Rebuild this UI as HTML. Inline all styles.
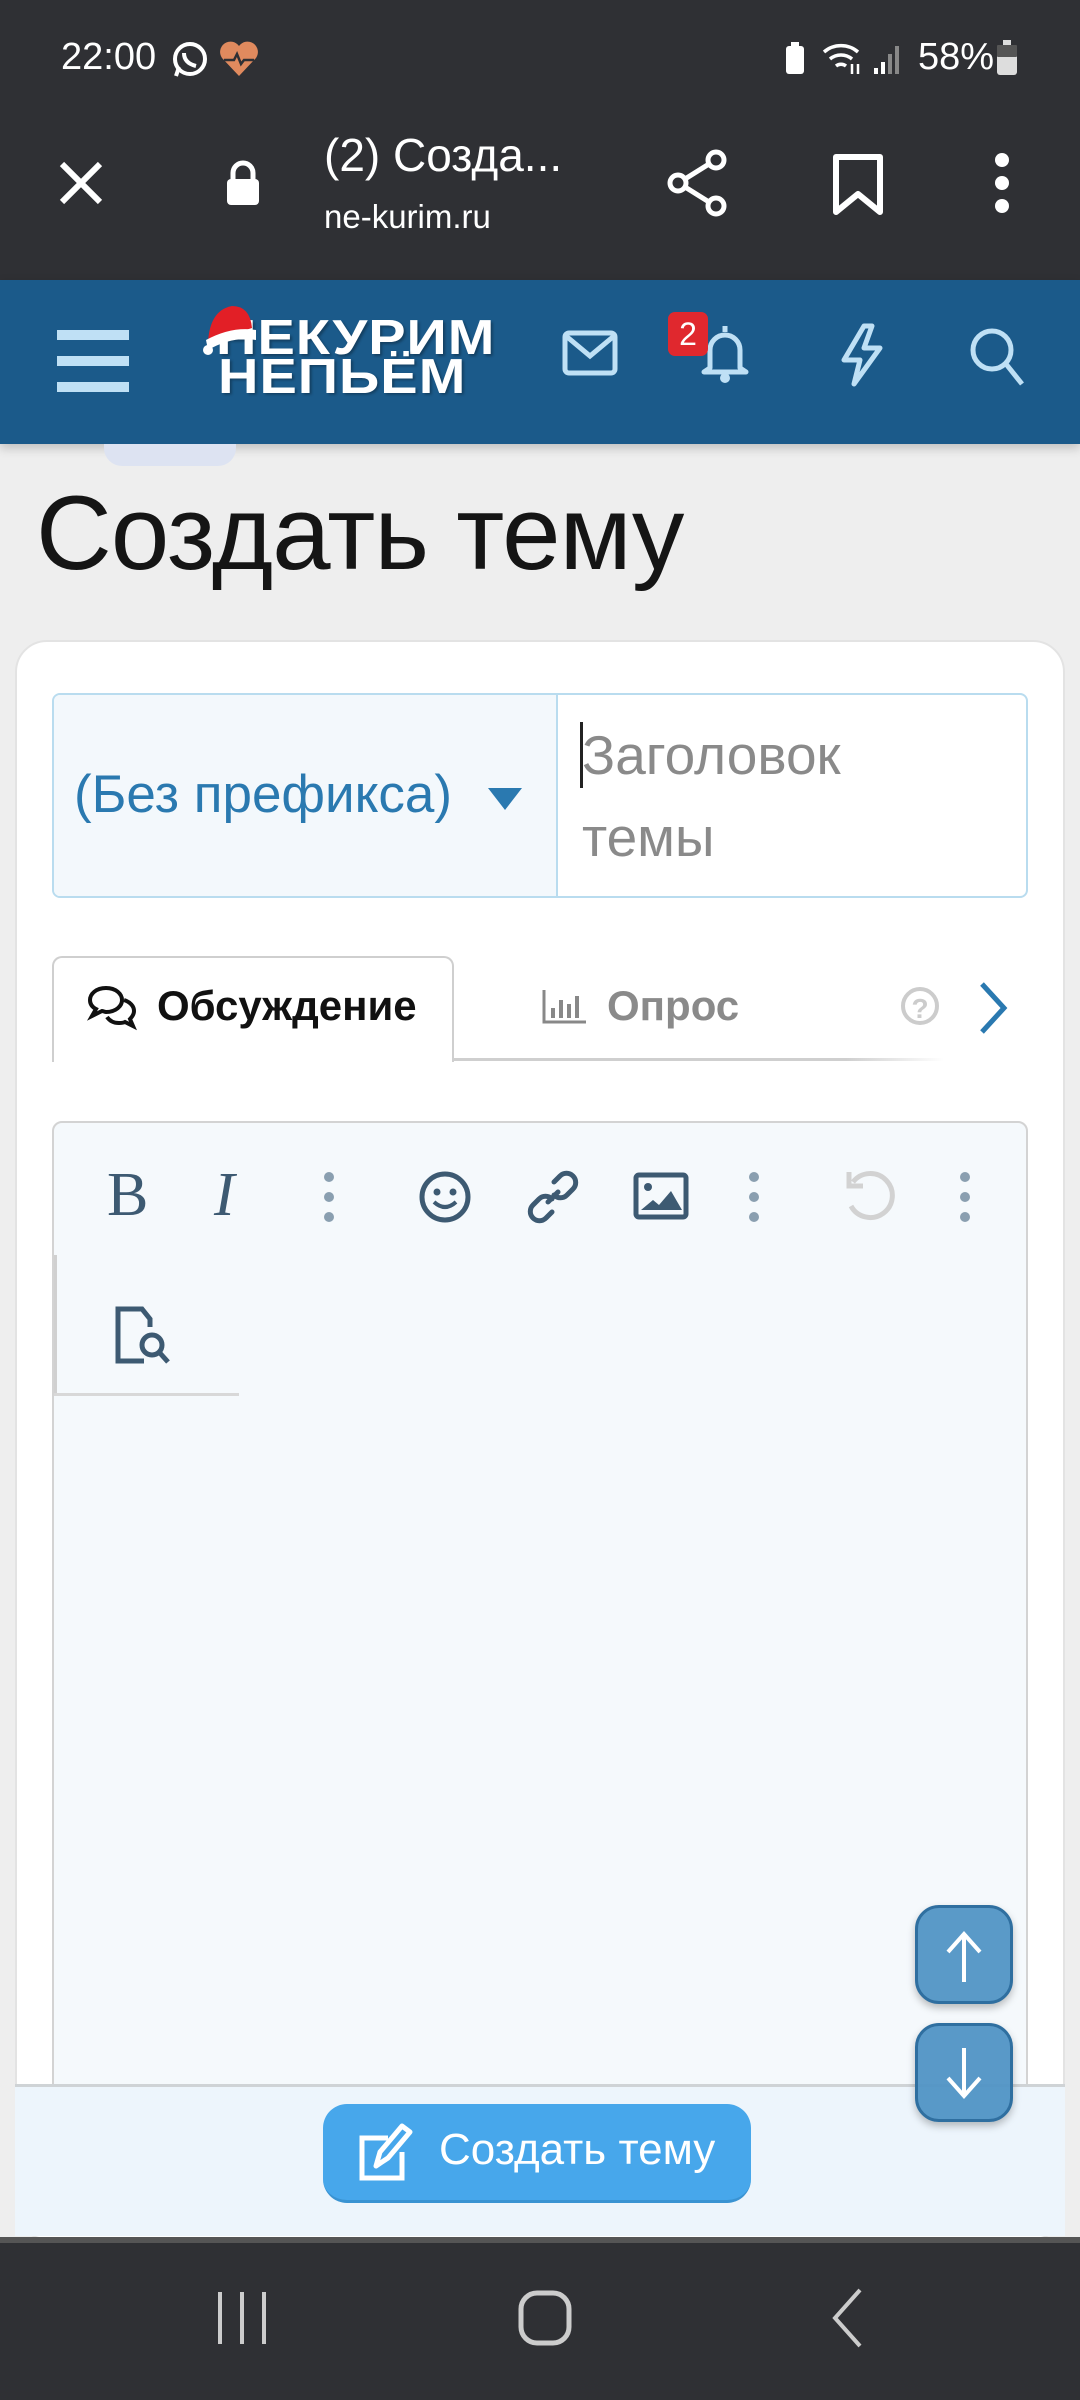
<!DOCTYPE html>
<html><head><meta charset="utf-8"><style>
*{margin:0;padding:0;box-sizing:border-box}
body{width:1080px;height:2400px;overflow:hidden;background:#eeeeee;font-family:"Liberation Sans","Noto Sans CJK SC",sans-serif;position:relative}
.abs{position:absolute}
</style></head><body>
<div class="abs" style="left:0;top:0;width:1080px;height:280px;background:#2f3034"></div>
<div class="abs" style="left:61px;top:36px;color:#fff;font-size:38px">22:00</div>
<svg class="abs" style="left:170px;top:40px" width="40" height="40" viewBox="0 0 40 40"><circle cx="20" cy="19" r="15" fill="none" stroke="#fff" stroke-width="4"/><path d="M6 36l3-9" stroke="#fff" stroke-width="4"/><path d="M14 13q0 10 12 13" stroke="#fff" stroke-width="4" fill="none"/></svg>
<svg class="abs" style="left:218px;top:40px" width="42" height="38" viewBox="0 0 42 38"><path d="M21 36L4 18A10 10 0 0 1 21 6A10 10 0 0 1 38 18Z" fill="#e08a5e"/><path d="M6 20h10l3-6 4 10 3-4h10" stroke="#2f3034" stroke-width="2.5" fill="none"/></svg>
<svg class="abs" style="left:784px;top:42px" width="22" height="34"><rect x="2" y="4" width="18" height="28" rx="3" fill="#fff"/><rect x="7" y="0" width="8" height="5" fill="#fff"/></svg>
<svg class="abs" style="left:822px;top:40px" width="42" height="36" viewBox="0 0 42 36"><path d="M2 12a26 26 0 0 1 34 0M8 19a17 17 0 0 1 22 0M14 26a8 8 0 0 1 10 0" stroke="#fff" stroke-width="3.5" fill="none"/><path d="M30 24v10M36 34V24" stroke="#fff" stroke-width="2.5"/></svg>
<svg class="abs" style="left:872px;top:42px" width="28" height="34"><rect x="2" y="26" width="4" height="6" fill="#fff"/><rect x="9" y="20" width="4" height="12" fill="#fff"/><rect x="16" y="12" width="4" height="20" fill="#888"/><rect x="23" y="4" width="4" height="28" fill="#888"/></svg>
<div class="abs" style="left:918px;top:36px;color:#fff;font-size:38px">58%</div>
<svg class="abs" style="left:996px;top:40px" width="22" height="36"><rect x="1" y="5" width="20" height="30" rx="3" fill="#ddd"/><rect x="1" y="5" width="20" height="12" rx="1" fill="#555"/><rect x="7" y="0" width="8" height="5" fill="#ddd"/></svg>
<svg class="abs" style="left:58px;top:160px" width="46" height="46"><path d="M4 4L42 42M42 4L4 42" stroke="#fff" stroke-width="6"/></svg>
<svg class="abs" style="left:224px;top:160px" width="38" height="46"><path d="M9 20v-7a10 10 0 0 1 20 0v7" stroke="#fff" stroke-width="5" fill="none"/><rect x="3" y="19" width="32" height="26" rx="4" fill="#fff"/></svg>
<div class="abs" style="left:324px;top:128px;color:#fff;font-size:46px">(2) Созда...</div>
<div class="abs" style="left:324px;top:198px;color:#fff;font-size:33px">ne-kurim.ru</div>
<svg class="abs" style="left:664px;top:148px" width="66" height="70" viewBox="0 0 66 70"><circle cx="52" cy="12" r="8" fill="none" stroke="#fff" stroke-width="5"/><circle cx="14" cy="35" r="8" fill="none" stroke="#fff" stroke-width="5"/><circle cx="52" cy="58" r="8" fill="none" stroke="#fff" stroke-width="5"/><path d="M21 31L45 16M21 39L45 54" stroke="#fff" stroke-width="5"/></svg>
<svg class="abs" style="left:832px;top:154px" width="52" height="62"><path d="M4 3h44v55L26 40 4 58Z" fill="none" stroke="#fff" stroke-width="6" stroke-linejoin="round"/></svg>
<svg class="abs" style="left:990px;top:150px" width="24" height="66"><circle cx="12" cy="10" r="7" fill="#fff"/><circle cx="12" cy="33" r="7" fill="#fff"/><circle cx="12" cy="56" r="7" fill="#fff"/></svg>

<div class="abs" style="left:0;top:280px;width:1080px;height:164px;background:#1b5a8a;box-shadow:0 4px 10px rgba(0,0,0,.2)"></div>
<svg class="abs" style="left:57px;top:330px" width="72" height="62"><rect y="0" width="72" height="10" fill="#bfe0f5"/><rect y="26" width="72" height="10" fill="#bfe0f5"/><rect y="52" width="72" height="10" fill="#bfe0f5"/></svg>
<div class="abs" style="left:216px;top:318px;color:#fff;font-size:56px;font-weight:bold;line-height:44px;letter-spacing:1px;text-shadow:2px 2px 3px rgba(0,0,0,.3);transform:scaleY(.88);transform-origin:top left">НЕКУРИМ<br><span style="margin-left:2px">НЕПЬЁМ</span></div>
<svg class="abs" style="left:202px;top:300px" width="56" height="58" viewBox="0 0 56 58"><path d="M6 42Q8 10 30 6Q48 6 50 28Z" fill="#e21f26"/><path d="M4 40Q30 26 54 30L54 40Q30 36 6 50Z" fill="#fff"/><circle cx="6" cy="50" r="5" fill="#fff"/></svg>
<svg class="abs" style="left:562px;top:330px" width="56" height="46"><rect x="3" y="3" width="50" height="40" rx="4" fill="none" stroke="#bfe0f5" stroke-width="5"/><path d="M4 6L28 26L52 6" fill="none" stroke="#bfe0f5" stroke-width="5"/></svg>
<svg class="abs" style="left:700px;top:322px" width="50" height="62" viewBox="0 0 50 62"><path d="M25 4v6M10 46V28a15 15 0 0 1 30 0v18l6 4H4z" fill="none" stroke="#bfe0f5" stroke-width="5" stroke-linejoin="round"/><circle cx="25" cy="56" r="5" fill="#bfe0f5"/></svg>
<div class="abs" style="left:668px;top:312px;width:40px;height:44px;background:#e0282e;border-radius:7px;color:#fff;font-size:32px;text-align:center;line-height:44px">2</div>
<svg class="abs" style="left:838px;top:322px" width="48" height="66" viewBox="0 0 48 66"><path d="M26 4L6 38h16l-6 24 26-36H26L34 4Z" fill="none" stroke="#bfe0f5" stroke-width="5" stroke-linejoin="round"/></svg>
<svg class="abs" style="left:968px;top:326px" width="58" height="62"><circle cx="24" cy="24" r="19" fill="none" stroke="#bfe0f5" stroke-width="5"/><path d="M38 38L54 58" stroke="#bfe0f5" stroke-width="5"/></svg>

<div class="abs" style="left:104px;top:444px;width:132px;height:22px;background:#dde3f2;border-radius:0 0 18px 18px"></div>
<div class="abs" style="left:36px;top:474px;font-size:105px;color:#151515;letter-spacing:-1px">Создать тему</div>

<div class="abs" style="left:15px;top:640px;width:1050px;height:1600px;background:#fff;border:2px solid #e3e3e3;border-radius:32px"></div>
<div class="abs" style="left:52px;top:693px;width:976px;height:205px;border:2px solid #b9dcef;border-radius:8px;background:#fff"></div>
<div class="abs" style="left:54px;top:695px;width:504px;height:201px;background:#f3f8fc;border-right:2px solid #b9dcef;border-radius:6px 0 0 6px"></div>
<div class="abs" style="left:74px;top:764px;color:#2a79b0;font-size:53px">(Без префикса)</div>
<svg class="abs" style="left:488px;top:788px" width="34" height="22"><path d="M0 0h34L17 22z" fill="#2a79b0"/></svg>
<div class="abs" style="left:580px;top:722px;width:3px;height:66px;background:#222"></div>
<div class="abs" style="left:582px;top:714px;color:#8a8a8a;font-size:55px;line-height:82px">Заголовок<br>темы</div>

<div class="abs" style="left:52px;top:956px;width:402px;height:106px;border:2px solid #cfcfcf;border-bottom:none;border-radius:10px 10px 0 0;background:#fff"></div>
<div class="abs" style="left:454px;top:1058px;width:490px;height:3px;background:linear-gradient(to right,#cfcfcf 80%,rgba(207,207,207,0))"></div>
<svg class="abs" style="left:86px;top:984px" width="52" height="48" viewBox="0 0 52 48"><path d="M20 4C10 4 4 10 4 16c0 4 2 7 6 9l-4 7 10-5c1 0 3 1 4 1 10 0 16-6 16-12S30 4 20 4z" fill="none" stroke="#111" stroke-width="4"/><path d="M38 16c6 2 10 6 10 11 0 3-2 6-4 8l3 7-8-4c-2 1-4 1-6 1-6 0-10-3-12-6" fill="none" stroke="#111" stroke-width="4"/></svg>
<div class="abs" style="left:157px;top:982px;color:#111;font-size:42px;font-weight:bold">Обсуждение</div>
<svg class="abs" style="left:542px;top:990px" width="44" height="34"><path d="M2 0v32h42" stroke="#888" stroke-width="3" fill="none"/><path d="M11 18v10M19 10v18M27 14v14M35 6v22" stroke="#888" stroke-width="4"/></svg>
<div class="abs" style="left:607px;top:982px;color:#8a8a8a;font-size:42px;font-weight:bold">Опрос</div>
<svg class="abs" style="left:900px;top:984px" width="40" height="44"><circle cx="20" cy="22" r="17" fill="none" stroke="#ccc" stroke-width="4"/><text x="20" y="34" text-anchor="middle" font-size="28" font-weight="bold" fill="#ccc" font-family="Liberation Sans">?</text></svg>
<svg class="abs" style="left:976px;top:980px" width="34" height="56"><path d="M6 4L28 28L6 52" stroke="#2a79b0" stroke-width="5" fill="none"/></svg>

<div class="abs" style="left:52px;top:1121px;width:976px;height:1000px;border:2px solid #d3d3d3;border-radius:10px;background:#f5f9fc"></div>
<div class="abs" style="left:54px;top:1255px;width:3px;height:140px;background:#d0d0d0"></div>
<div class="abs" style="left:54px;top:1393px;width:185px;height:3px;background:#d8d8d8"></div>
<div class="abs" style="left:107px;top:1160px;color:#3d5a72;font-size:62px;font-family:'Liberation Serif',serif">B</div>
<div class="abs" style="left:214px;top:1160px;color:#3d5a72;font-size:62px;font-family:'Liberation Serif',serif;font-style:italic">I</div>
<svg class="abs" style="left:320px;top:1170px" width="18" height="54"><circle cx="9" cy="7" r="5" fill="#8a9fb0"/><circle cx="9" cy="27" r="5" fill="#8a9fb0"/><circle cx="9" cy="47" r="5" fill="#8a9fb0"/></svg>
<svg class="abs" style="left:418px;top:1170px" width="54" height="54"><circle cx="27" cy="27" r="23" fill="none" stroke="#3d5a72" stroke-width="5"/><circle cx="19" cy="22" r="3.5" fill="#3d5a72"/><circle cx="35" cy="22" r="3.5" fill="#3d5a72"/><path d="M16 32q11 10 22 0" fill="none" stroke="#3d5a72" stroke-width="4"/></svg>
<svg class="abs" style="left:524px;top:1168px" width="58" height="58" viewBox="0 0 58 58"><path d="M24 34l10-10M30 14l6-6a9 9 0 0 1 13 13l-6 6a9 9 0 0 1-13 0M28 44l-6 6a9 9 0 0 1-13-13l6-6a9 9 0 0 1 13 0" fill="none" stroke="#3d5a72" stroke-width="5" stroke-linecap="round"/></svg>
<svg class="abs" style="left:633px;top:1172px" width="56" height="48"><rect x="3" y="3" width="50" height="42" rx="3" fill="none" stroke="#3d5a72" stroke-width="5"/><circle cx="15" cy="15" r="4" fill="#3d5a72"/><path d="M8 38l12-10 6 5 12-14 11 19z" fill="#3d5a72"/></svg>
<svg class="abs" style="left:745px;top:1170px" width="18" height="54"><circle cx="9" cy="7" r="5" fill="#8a9fb0"/><circle cx="9" cy="27" r="5" fill="#8a9fb0"/><circle cx="9" cy="47" r="5" fill="#8a9fb0"/></svg>
<svg class="abs" style="left:843px;top:1168px" width="56" height="58"><path d="M10 14a22 22 0 1 1-2 24" fill="none" stroke="#d2d2d2" stroke-width="5"/><path d="M6 4v14h14" fill="none" stroke="#d2d2d2" stroke-width="5"/></svg>
<svg class="abs" style="left:956px;top:1170px" width="18" height="54"><circle cx="9" cy="7" r="5" fill="#8a9fb0"/><circle cx="9" cy="27" r="5" fill="#8a9fb0"/><circle cx="9" cy="47" r="5" fill="#8a9fb0"/></svg>
<svg class="abs" style="left:114px;top:1305px" width="64" height="60" viewBox="0 0 64 60"><path d="M30 56H4V4h24l8 10v8" fill="none" stroke="#3d5a72" stroke-width="5"/><circle cx="38" cy="40" r="10" fill="none" stroke="#3d5a72" stroke-width="5"/><path d="M45 47l9 10" stroke="#3d5a72" stroke-width="5"/></svg>

<div class="abs" style="left:15px;top:2084px;width:1050px;height:152px;background:#edf5fc;border-top:3px solid #cfd3d6"></div>
<div class="abs" style="left:323px;top:2104px;width:428px;height:99px;background:#47a7eb;border-radius:24px;border-bottom:3px solid #3a93d2"></div>
<svg class="abs" style="left:358px;top:2120px" width="60" height="64" viewBox="0 0 60 64"><path d="M30 18H4v40h40V32" fill="none" stroke="#fff" stroke-width="5"/><path d="M18 46l4-14L44 6l8 6-22 26z" fill="none" stroke="#fff" stroke-width="5" stroke-linejoin="round"/></svg>
<div class="abs" style="left:439px;top:2125px;color:#fff;font-size:44px">Создать тему</div>
<div class="abs" style="left:915px;top:1905px;width:98px;height:99px;background:#5a9ac8;border:3px solid #2f6fa0;border-radius:24px;box-shadow:0 4px 8px rgba(0,0,0,.25)"></div>
<svg class="abs" style="left:944px;top:1930px" width="40" height="54"><path d="M20 52V4M4 22L20 4l16 18" stroke="#fff" stroke-width="4" fill="none"/></svg>
<div class="abs" style="left:915px;top:2023px;width:98px;height:99px;background:rgba(80,148,197,.95);border:3px solid #2f6fa0;border-radius:24px;box-shadow:0 4px 8px rgba(0,0,0,.25)"></div>
<svg class="abs" style="left:944px;top:2046px" width="40" height="54"><path d="M20 2v48M4 32l16 18 16-18" stroke="#fff" stroke-width="4" fill="none"/></svg>

<div class="abs" style="left:0;top:2237px;width:1080px;height:163px;background:#2f3034;border-top:6px solid #555"></div>
<svg class="abs" style="left:216px;top:2290px" width="52" height="56"><path d="M4 2v52M26 2v52M48 2v52" stroke="#ccc" stroke-width="4"/></svg>
<svg class="abs" style="left:518px;top:2290px" width="54" height="56"><rect x="3" y="3" width="48" height="50" rx="16" fill="none" stroke="#ccc" stroke-width="5"/></svg>
<svg class="abs" style="left:830px;top:2288px" width="34" height="60"><path d="M30 2L5 30l25 28" stroke="#ccc" stroke-width="4" fill="none"/></svg>
</body></html>
